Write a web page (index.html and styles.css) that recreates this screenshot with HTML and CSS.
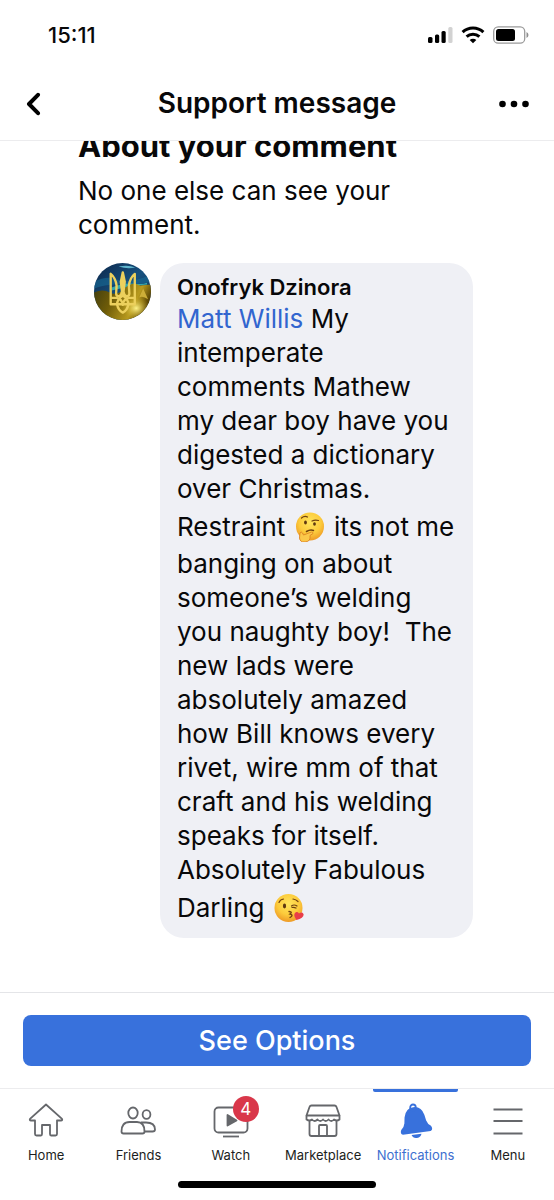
FILE: index.html
```html
<!DOCTYPE html>
<html lang="en">
    <head>
        <meta charset="utf-8">
        <meta name="viewport" content="width=device-width, initial-scale=1">
        <title>Support message</title>
        <link rel="stylesheet" href="styles.css">
    </head>
    <body>
        <header>
            <div class="status">
                <span class="time">15:11</span>
                <div class="statusIcons">
                    <svg width="25" height="18" viewBox="0 0 25 18">
                        <rect x="0" y="11" width="4.500" height="6" rx="1.5"/>
                        <rect x="7" y="8.500" width="4.200" height="8.500" rx="1.500"/>
                        <rect x="13.500" y="5" width="4.200" height="12" rx="1.500"/>
                        <rect x="20.300" y="1" width="4.200" height="16" rx="1.500" fill="#d2d2d2"/>
                    </svg>
                    <svg width="24" height="18" viewBox="0 0 24 18">
                        <g fill="none" stroke="#000" stroke-width="3">
                            <path d="M1.600 6.200a15 15 0 0 1 20.800 0"/>
                            <path d="M5.600 10.700a9.300 9.300 0 0 1 12.800 0"/>
                        </g>
                        <path d="M12 17.300l-3.300-3.300a4.700 4.700 0 0 1 6.600 0z"/>
                    </svg>
                    <svg width="36" height="18" viewBox="0 0 36 18">
                        <rect x="0.700" y="0.800" width="31" height="16.400" rx="4.500" fill="none" stroke="#9a9a9a" stroke-width="1.300"/>
                        <rect x="3" y="3" width="19" height="12" rx="2.500"/>
                        <path d="M33.500 6q2 1 2 3t-2 3z" fill="#8e8e8e"/>
                    </svg>
                </div>
            </div>
            <div class="titleBar">
                <button type="button" class="iconButton" aria-label="Back">
                    <svg width="16" height="24" viewBox="0 0 16 24"><path d="M13 2.800L4 12l9 9.200" fill="none" stroke="#000" stroke-width="4" stroke-linecap="round" stroke-linejoin="round"/></svg>
                </button>
                <h1>Support message</h1>
                <button type="button" class="iconButton more" aria-label="More">
                    <svg width="30" height="8" viewBox="0 0 30 8"><circle cx="3.500" cy="4" r="3.300"/><circle cx="15" cy="4" r="3.300"/><circle cx="26.500" cy="4" r="3.300"/></svg>
                </button>
            </div>
        </header>

        <main>
            <h2>About your comment</h2>
            <p>No one else can see your comment.</p>

            <div class="comment">
                <svg class="avatar" viewBox="0 0 58 58">
                    <defs>
                        <clipPath id="round"><circle cx="29" cy="29" r="29"/></clipPath>
                        <linearGradient id="sky" x1="0" y1="0" x2="1" y2="1">
                            <stop offset="0" stop-color="#0c2548"/>
                            <stop offset="0.500" stop-color="#17517f"/>
                            <stop offset="1" stop-color="#102442"/>
                        </linearGradient>
                        <linearGradient id="field" x1="0" y1="0" x2="1" y2="0.300">
                            <stop offset="0" stop-color="#3f3c10"/>
                            <stop offset="0.400" stop-color="#6f5c08"/>
                            <stop offset="0.800" stop-color="#b89a1d"/>
                            <stop offset="1" stop-color="#5d4806"/>
                        </linearGradient>
                        <radialGradient id="glow">
                            <stop offset="0" stop-color="#fff38a"/>
                            <stop offset="1" stop-color="#c9ab22" stop-opacity="0"/>
                        </radialGradient>
                    </defs>
                    <g clip-path="url(#round)">
                        <rect width="58" height="58" fill="url(#sky)"/>
                        <path d="M25 3.500q10-2 17 1q-8 2-17-1z" fill="#5eb5cd"/>
                        <path d="M0 19q14-7 24-2t34-5v7q-20 4-32 3t-26 4z" fill="#176a96" opacity="0.600"/>
                        <path d="M18 25q12-5 22-4t14-1v2q-16 1-36 6z" fill="#35a9ad"/>
                        <path d="M0 30q9-4 16 0t15-4t16-3l11-1v36H0z" fill="url(#field)"/>
                        <ellipse cx="43" cy="46" rx="14" ry="12" fill="url(#glow)"/>
                        <path d="M46 35l4-9 5 11q-5-4-9-2z" fill="#cdae38"/>
                    </g>
                    <g fill="none" stroke="#ecd05d" stroke-width="2.400" stroke-linejoin="round">
                        <path d="M17 11v31h24.500V11q-5 4-6 12l.5 8q0 3-3 3q-2.500-1-3-5L31.300 19 29.300 9.500 27.300 19 28.500 29q-.5 4-3 5q-3 0-3-3l.5-8q-1-8-6-12z"/>
                        <path d="M17 35.500h6q5.500 1 6.300 7q.8-6 6.200-7h6"/>
                        <path d="M23.500 42q0-5 5.800-9q5.700 4 5.700 9q-1 6-5.700 8.500q-4.800-2.500-5.800-8.500z"/>
                        <path d="M29.300 12v21"/>
                    </g>
                </svg>
                <div class="bubble">
                    <h3>Onofryk Dzinora</h3>
                    <p><a href="#">Matt Willis</a> My<br>
                        intemperate<br>
                        comments Mathew<br>
                        my dear boy have you<br>
                        digested a dictionary<br>
                        over Christmas.<br>
                        Restraint <svg class="emoji" role="img" aria-label="thinking face" viewBox="0 0 30 30">
                            <defs>
                                <radialGradient id="face" cx="0.500" cy="0.350" r="0.650">
                                    <stop offset="0" stop-color="#ffe45c"/>
                                    <stop offset="0.600" stop-color="#fccb3c"/>
                                    <stop offset="1" stop-color="#ee9a26"/>
                                </radialGradient>
                            </defs>
                            <circle cx="15" cy="14.500" r="14" fill="url(#face)"/>
                            <g fill="none" stroke="#70410f" stroke-linecap="round">
                                <path d="M6.500 6q3-2.500 6-1M17 9q3-1.500 6.500-.5" stroke-width="1.200"/>
                                <path d="M11.500 19.500q4-2.500 7-1" stroke-width="1.500"/>
                            </g>
                            <ellipse cx="10.500" cy="10.500" rx="1.400" ry="2" fill="#5e3710"/>
                            <ellipse cx="19.500" cy="12" rx="1.400" ry="1.800" fill="#5e3710"/>
                            <path d="M5 21q1-2 2.500 0l1 2 8-3q2 0 1.500 1.500l-3 2q1 6-5 6.500q-5 .5-5.500-4z" fill="#fbc84a" stroke="#df8522" stroke-width="0.900"/>
                        </svg> its not me<br>
                        banging on about<br>
                        someone’s welding<br>
                        you naughty boy!&nbsp; The<br>
                        new lads were<br>
                        absolutely amazed<br>
                        how Bill knows every<br>
                        rivet, wire mm of that<br>
                        craft and his welding<br>
                        speaks for itself.<br>
                        Absolutely Fabulous<br>
                        Darling <svg class="emoji" role="img" aria-label="face blowing a kiss" viewBox="0 0 30 30">
                            <circle cx="14.500" cy="15" r="14" fill="url(#face)"/>
                            <g fill="none" stroke="#70410f" stroke-linecap="round">
                                <path d="M5 9.500q1-3 4.500-3.500M19 6q3 .5 5 2.500" stroke-width="1.200"/>
                                <path d="M17.500 13q2.500-2 5.500 0M18 14.500q2-.5 4 .5" stroke-width="1.200"/>
                                <path d="M15 18.500q4 .5 1 2.500q4 1 0 3.500" stroke-width="1.400"/>
                            </g>
                            <ellipse cx="10.500" cy="13" rx="1.600" ry="2.400" fill="#5e3710"/>
                            <path d="M22.500 27q-3.500-4-1.500-7q2-2 4 .5q3-2 4.500 .5q1 4-7 6z" fill="#e93d48"/>
                        </svg></p>
                </div>
            </div>
        </main>

        <div class="actions">
            <button type="button">See Options</button>
        </div>

        <nav>
            <a href="#">
                <svg class="tabIcon" viewBox="0 0 36 36">
                    <path d="M18 2.500L2 16.800q-.8 1.700 1 1.700h4V32q0 1.500 1.500 1.500h4.500q1 0 1-1.500v-9h8v9q0 1.500 1 1.500h4.500q1.500 0 1.500-1.500V18.500h4q1.800 0 1-1.700z"/>
                </svg>
                Home
            </a>
            <a href="#">
                <svg class="tabIcon" viewBox="0 0 36 36">
                    <ellipse cx="13" cy="11" rx="4.700" ry="5.500"/>
                    <ellipse cx="26.500" cy="12.500" rx="3.900" ry="4.300"/>
                    <path d="M3.500 31.500q-2 0-2-2q0-9.500 8-9.500h7.500q7.500 0 7.500 9.500q0 2-2 2z"/>
                    <path d="M21 20.500h5q9 0 9 7q0 2-2.500 2h-8"/>
                </svg>
                Friends
            </a>
            <a href="#">
                <svg class="tabIcon" viewBox="0 0 36 36">
                    <rect x="1.500" y="5.500" width="33" height="25" rx="4"/>
                    <path d="M14.500 13v10.500l9-5z" fill="#65676b"/>
                    <path d="M10 34.500h16"/>
                </svg>
                <span class="badge">4</span>
                Watch
            </a>
            <a href="#">
                <svg class="tabIcon" viewBox="0 0 36 36">
                    <path d="M6.500 3.500h23q1.500 0 2 1.500l3 8.500H1.500l3-8.500q.5-1.500 2-1.500z"/>
                    <path d="M1.500 13.500v4q3 2 5.500 0q2.500 3 5.500 0q2.800 3 5.500 0q2.800 3 5.500 0q2.800 3 5.500 0q3 2 5.500 0v-4"/>
                    <path d="M4.500 19v13q0 2 2 2h23q2 0 2-2V19"/>
                    <path d="M14 34V24q0-1 1-1h6q1 0 1 1v10"/>
                </svg>
                Marketplace
            </a>
            <a href="#" class="current">
                <svg class="tabIcon" viewBox="0 0 36 36">
                    <g class="solid" transform="rotate(-8 18 18)">
                        <path d="M18 5q8 0 10 9l1 6q1 4 4 6q2 4-1 5H4q-3-1-1-5q3-2 4-6l1-6q2-9 10-9z"/>
                        <path d="M12.500 32.500h10q-1 3.500-5 3.500t-5-3.500z"/>
                    </g>
                    <ellipse cx="16" cy="5.500" rx="2.800" ry="3"/>
                </svg>
                Notifications
            </a>
            <a href="#">
                <svg class="tabIcon" viewBox="0 0 36 36">
                    <path d="M3.500 7.500h29M3.500 19h29M3.500 31.500h29"/>
                </svg>
                Menu
            </a>
        </nav>
        <div class="homeBar"></div>
    </body>
</html>
```
FILE: styles.css
```css
* {
    box-sizing: border-box;
}

body {
    margin: 0;
    min-height: 100vh;
    display: flex;
    flex-direction: column;
    background: #fff;
    color: #080809;
    font-family: Inter, "Liberation Sans", sans-serif;
}

h1, h2, h3, p {
    margin: 0;
}

a {
    text-decoration: none;
}

button {
    border: 0;
    padding: 0;
    font-family: inherit;
}

/* top of the screen */
header {
    border-bottom: 1px solid #ececee;
}

.status {
    height: 70px;
    padding: 0 25px 0 48px;
    display: flex;
    justify-content: space-between;
    align-items: center;
}

.time {
    font-size: 22px;
    font-weight: 500;
}

.statusIcons {
    display: flex;
    gap: 8px;
}

.titleBar {
    height: 70px;
    padding: 0 25px 2px;
    display: flex;
    justify-content: space-between;
    align-items: center;
}

.titleBar h1 {
    font-size: 28px;
    line-height: 34px;
    font-weight: 600;
    padding-bottom: 2px;
}

.iconButton {
    width: 30px;
    height: 34px;
    display: flex;
    align-items: center;
    background: none;
}

/* scrolled content, the heading is half under the title bar */
main {
    flex: 1;
    overflow: hidden;
    padding: 0 81px 40px 78px;
    font-size: 26px;
    line-height: 34px;
}

main h2 {
    margin-top: -12px;
    margin-bottom: 11px;
    font-size: 31px;
    line-height: 34px;
    font-weight: 700;
    white-space: nowrap;
}

.comment {
    margin: 21px 0 0 16px;
    display: flex;
    align-items: flex-start;
    gap: 9px;
}

.avatar {
    flex: none;
    width: 57px;
    height: 57px;
}

.bubble {
    flex: 1;
    padding: 10px 0 10px 17px;
    border-radius: 24px;
    background: #eff0f5;
}

.bubble h3 {
    font-size: 22px;
    line-height: 29px;
    font-weight: 600;
}

.bubble p {
    white-space: nowrap;
}

.bubble a {
    color: #3265cf;
}

/* taller than the text, so its line grows a little */
.emoji {
    width: 30px;
    height: 30px;
    margin: 6px 2px 0;
    vertical-align: -6px;
    margin-bottom: 5px;
    vertical-align: -11px;
}

.actions {
    padding: 22px 23px;
    border-top: 1px solid #e4e5e8;
}

.actions button {
    width: 100%;
    height: 51px;
    border-radius: 8px;
    background: #3871dc;
    color: #fff;
    font-size: 27px;
    font-weight: 500;
}

/* bottom tabs */
nav {
    display: grid;
    grid-template-columns: repeat(6, 1fr);
    border-top: 1px solid #ececee;
}

nav a {
    position: relative;
    height: 92px;
    padding-top: 13px;
    display: flex;
    flex-direction: column;
    align-items: center;
    gap: 8px;
    color: #1c1e21;
    font-size: 13px;
    line-height: 18px;
}

.tabIcon {
    width: 36px;
    height: 36px;
    fill: none;
    stroke: #65676b;
    stroke-width: 1.8;
    stroke-linejoin: round;
}

.current {
    color: #3d6fd0;
}

.current .tabIcon {
    stroke: #3871dc;
}

.current .solid {
    fill: #3871dc;
    stroke: none;
}

.current::before {
    content: "";
    position: absolute;
    top: 0;
    left: 4px;
    right: 4px;
    height: 3px;
    border-radius: 0 0 2px 2px;
    background: #3871dc;
}

.badge {
    position: absolute;
    top: 7px;
    left: 50%;
    margin-left: 2px;
    width: 26px;
    height: 26px;
    border-radius: 50%;
    background: #d9374a;
    color: #fff;
    font-size: 17px;
    line-height: 26px;
    text-align: center;
}

.homeBar {
    width: 198px;
    height: 7px;
    margin: 0 auto 12px;
    border-radius: 4px;
    background: #000;
}
```
